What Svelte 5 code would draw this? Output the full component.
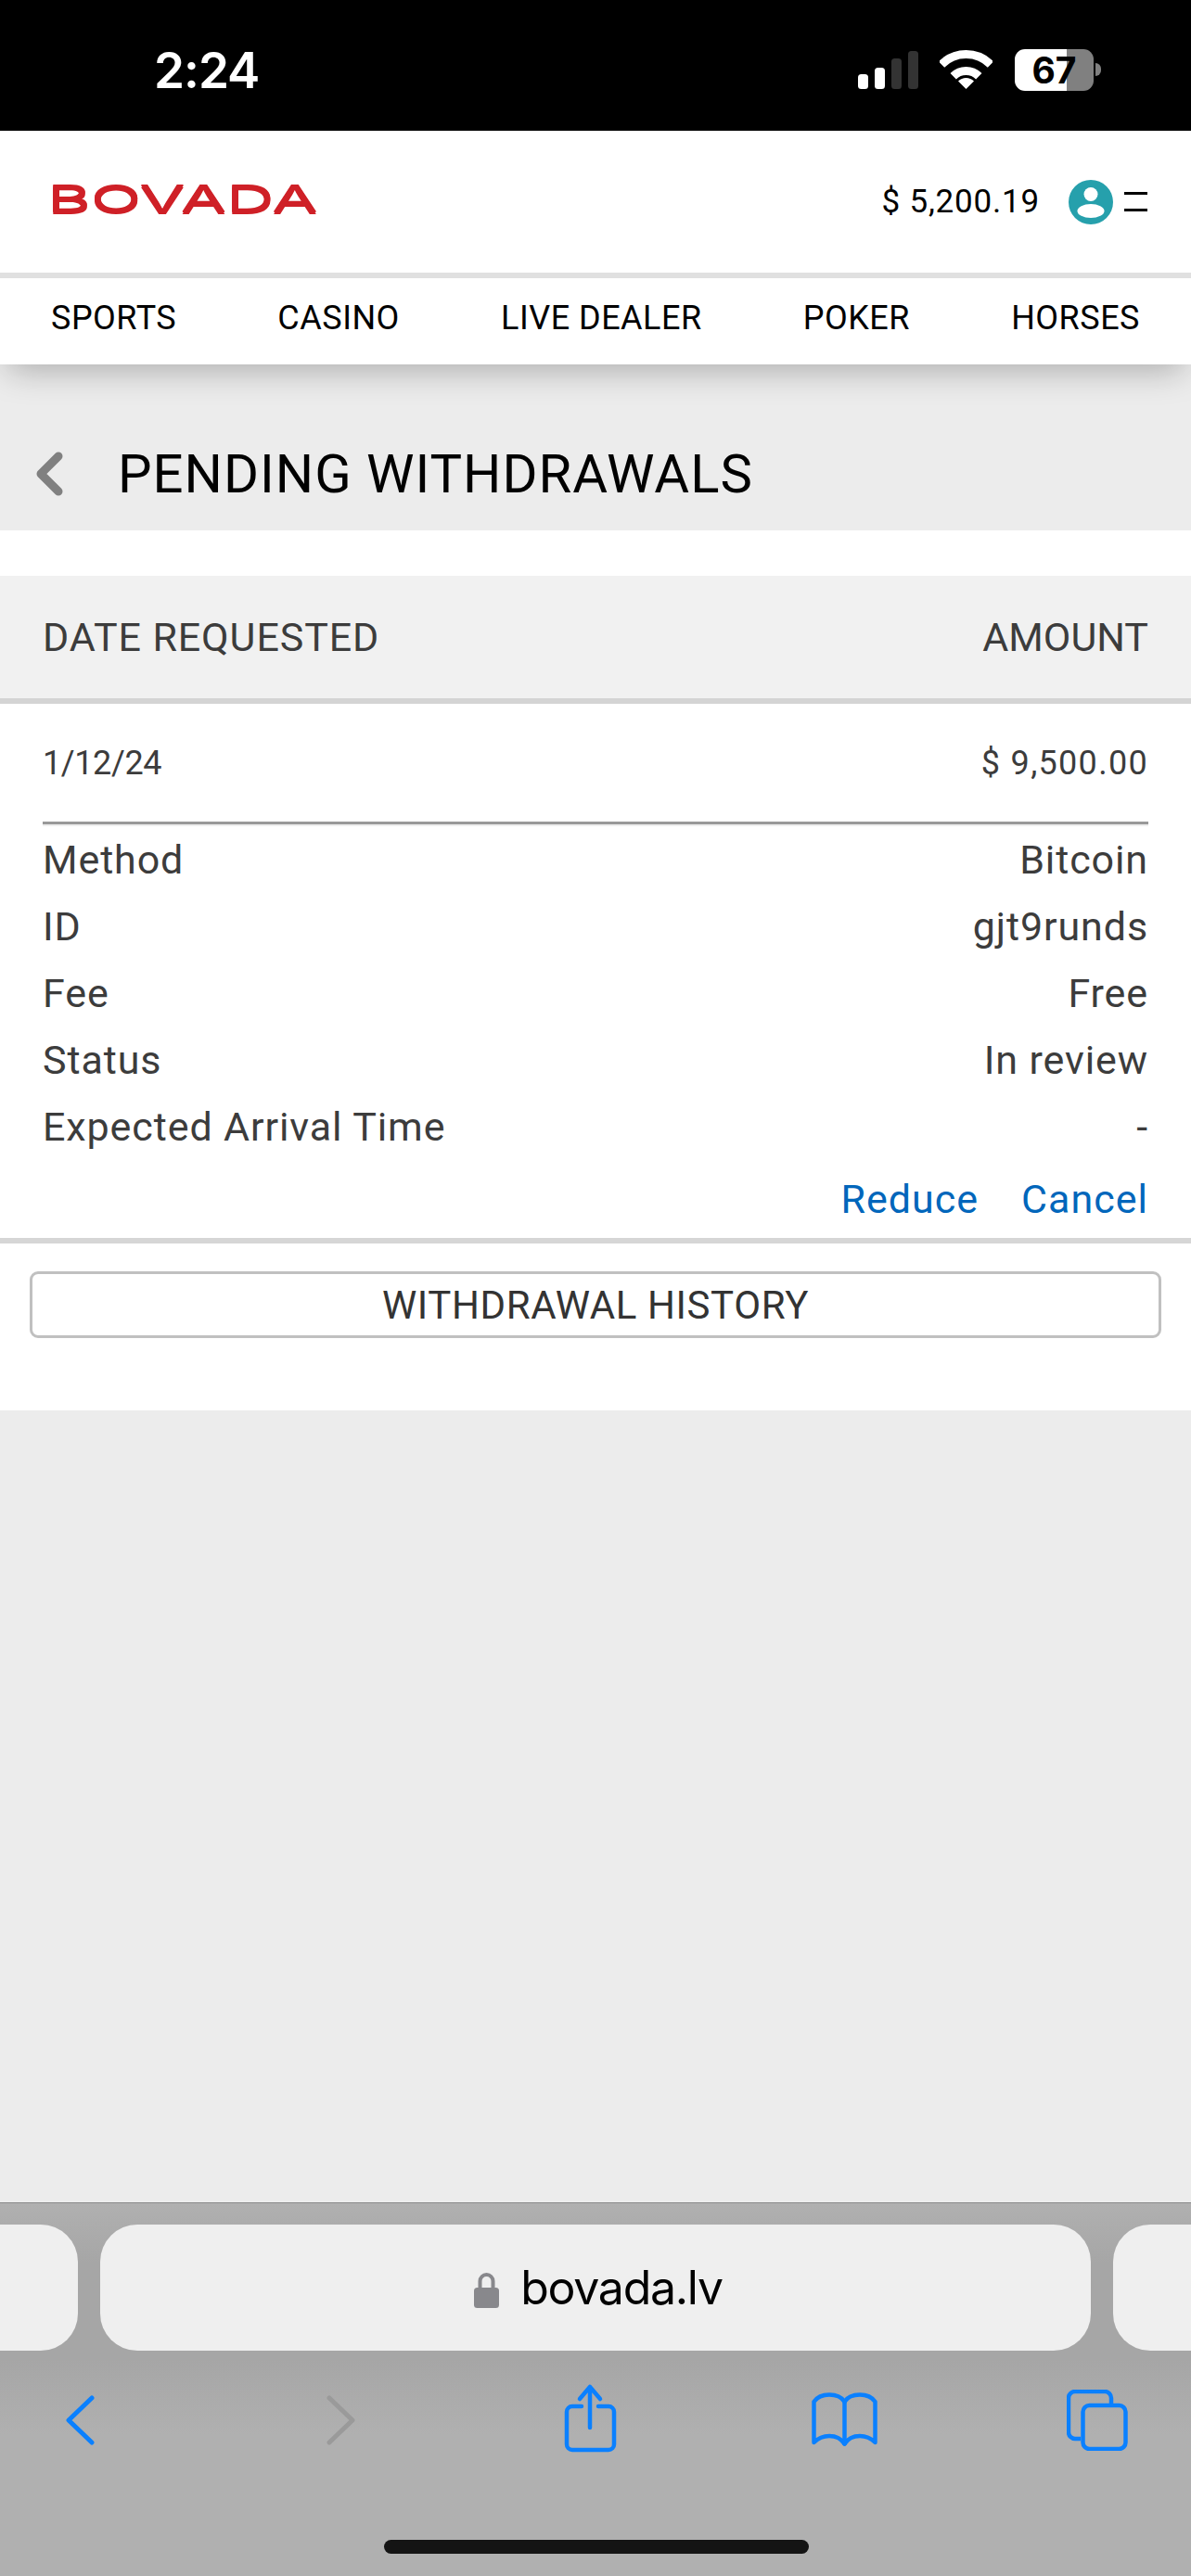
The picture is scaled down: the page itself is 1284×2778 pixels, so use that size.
<script>
  const navItems = ['SPORTS', 'CASINO', 'LIVE DEALER', 'POKER', 'HORSES'];

  const details = [
    { label: 'Method', value: 'Bitcoin' },
    { label: 'ID', value: 'gjt9runds' },
    { label: 'Fee', value: 'Free' },
    { label: 'Status', value: 'In review' },
    { label: 'Expected Arrival Time', value: '-' },
  ];
</script>

<div class="phone">
  <header class="status-bar">
    <span class="clock">2:24</span>
    <div class="status-icons">
      <svg class="signal" viewBox="0 0 65 41" aria-hidden="true">
        <rect x="0" y="25" width="11" height="16" rx="3.5" fill="#fff" />
        <rect x="18" y="18" width="11" height="23" rx="3.5" fill="#fff" />
        <rect x="36" y="8" width="11" height="33" rx="3.5" fill="#333" />
        <rect x="54" y="0" width="11" height="41" rx="3.5" fill="#333" />
      </svg>
      <svg class="wifi" viewBox="0 0 57 42" aria-hidden="true">
        <path d="M2 15.5A37.5 37.5 0 0 1 55 15.5" fill="none" stroke="#fff" stroke-width="9" />
        <path d="M14.7 28.2A19.5 19.5 0 0 1 42.3 28.2" fill="none" stroke="#fff" stroke-width="9" />
        <path d="M28.5 42L20 33.5A12 12 0 0 1 37 33.5Z" fill="#fff" />
      </svg>
      <div class="battery"><span>67</span></div>
      <div class="battery-cap"></div>
    </div>
  </header>

  <div class="top-bar">
    <span class="logo"><span class="logo-text">BOVADA</span></span>
    <div class="account">
      <span class="balance">$ 5,200.19</span>
      <svg class="avatar" viewBox="0 0 48 48" aria-hidden="true">
        <circle cx="24" cy="24" r="24" fill="#26a0ac" />
        <circle cx="24" cy="15.5" r="7.5" fill="#fff" />
        <ellipse cx="24" cy="33.5" rx="14.5" ry="7.5" fill="#fff" />
      </svg>
      <div class="menu-icon"><i></i><i></i></div>
    </div>
  </div>

  <nav class="main-nav">
    {#each navItems as item}
      <span>{item}</span>
    {/each}
  </nav>

  <div class="page-title">
    <svg class="back" viewBox="0 0 32 50" aria-hidden="true">
      <path d="M25 6L6 25L25 44" fill="none" stroke="#808080" stroke-width="9" stroke-linecap="round" stroke-linejoin="round" />
    </svg>
    <h1>PENDING WITHDRAWALS</h1>
  </div>

  <main class="panel">
    <div class="table-head">
      <span>DATE REQUESTED</span>
      <span class="amount-head">AMOUNT</span>
    </div>

    <div class="withdrawal">
      <div class="summary">
        <span class="date">1/12/24</span>
        <span class="amount">$ 9,500.00</span>
      </div>
      <dl class="details">
        {#each details as row}
          <div class="detail-row">
            <dt>{row.label}</dt>
            <dd>{row.value}</dd>
          </div>
        {/each}
      </dl>
      <div class="actions">
        <span>Reduce</span>
        <span>Cancel</span>
      </div>
    </div>

    <div class="history">
      <button type="button">WITHDRAWAL HISTORY</button>
    </div>
  </main>

  <div class="spacer"></div>

  <footer class="browser-bar">
    <div class="tabs">
      <div class="tab"></div>
      <div class="tab current">
        <svg class="lock" viewBox="0 0 27 39" aria-hidden="true">
          <path d="M6.5 18V10a7 7 0 0 1 14 0v8" fill="none" stroke="#88888c" stroke-width="4" />
          <rect x="0" y="17" width="27" height="22" rx="3.5" fill="#88888c" />
        </svg>
        <span>bovada.lv</span>
      </div>
      <div class="tab"></div>
    </div>

    <div class="tools">
      <svg class="chevron" viewBox="0 0 31 54" aria-hidden="true">
        <path d="M28 3L3 27L28 51" fill="none" stroke="#0a80ff" stroke-width="5" stroke-linecap="round" stroke-linejoin="round" />
      </svg>
      <svg class="chevron forward" viewBox="0 0 31 54" aria-hidden="true">
        <path d="M3 3L28 27L3 51" fill="none" stroke="#9a9a9a" stroke-width="5" stroke-linecap="round" stroke-linejoin="round" />
      </svg>
      <svg class="share" viewBox="0 0 58 76" aria-hidden="true">
        <g fill="none" stroke="#0a80ff" stroke-width="4.5" stroke-linecap="round" stroke-linejoin="round">
          <path d="M19 25H9a6 6 0 0 0-6 6V66a6 6 0 0 0 6 6H48a6 6 0 0 0 6-6V31a6 6 0 0 0-6-6H37" />
          <path d="M28 4V48M17 17L28 4L39 17" />
        </g>
      </svg>
      <svg class="book" viewBox="0 0 71 58" aria-hidden="true">
        <g fill="none" stroke="#0a80ff" stroke-width="4.5" stroke-linecap="round" stroke-linejoin="round">
          <path d="M35.5 10C32 4.500 26 2.500 19 2.500C11 2.500 6 5 2.500 10V54C8 48.500 14 47 19 47C26 47 32 50 35.500 55.500" />
          <path d="M35.5 10C39 4.500 45 2.500 52 2.500C60 2.500 65 5 68.500 10V54C63 48.500 57 47 52 47C45 47 39 50 35.500 55.500" />
          <path d="M35.5 10V55" />
        </g>
      </svg>
      <svg class="pages" viewBox="0 0 66 66" aria-hidden="true">
        <g fill="none" stroke="#0a80ff" stroke-width="4.5">
          <path d="M15 53H9a7 7 0 0 1-7-7V9a7 7 0 0 1 7-7H41a7 7 0 0 1 7 7v6" />
          <rect x="17.500" y="17" width="46" height="47" rx="7" />
        </g>
      </svg>
    </div>

    <div class="home-indicator"></div>
  </footer>
</div>

<style>
  :global(body) {
    background: #ececec;
  }

  .phone {
    display: flex;
    flex-direction: column;
    width: 1284px;
    height: 2778px;
    overflow: hidden;
    font-family: Roboto, sans-serif;
    color: #3c3c3c;
    background: #ececec;
  }

  .status-bar {
    flex: none;
    display: flex;
    align-items: center;
    justify-content: space-between;
    height: 141px;
    padding: 0 97px 0 166px;
    box-sizing: border-box;
    background: #000;
    color: #fff;
  }

  .clock {
    font-family: Inter, sans-serif;
    font-size: 53px;
    font-weight: 600;
    letter-spacing: -1px;
    margin-top: 11px;
  }

  .status-icons {
    display: flex;
    align-items: flex-start;
    height: 45px;
    margin-top: 10px;
  }

  .signal {
    width: 65px;
    height: 41px;
    margin: 2px 23px 0 0;
  }

  .wifi {
    width: 57px;
    height: 42px;
    margin: 1px 24px 0 0;
  }

  .battery {
    display: flex;
    align-items: center;
    justify-content: center;
    width: 85px;
    height: 45px;
    border-radius: 11px;
    background: linear-gradient(90deg, #fff 66%, #808080 66%);
    color: #000;
    font-family: Inter, sans-serif;
    font-size: 39px;
    font-weight: 700;
  }

  .battery-cap {
    width: 6px;
    height: 14px;
    margin: 15px 0 0 2px;
    border-radius: 0 7px 7px 0;
    background: #808080;
  }

  .top-bar {
    flex: none;
    position: relative;
    z-index: 1;
    display: flex;
    align-items: center;
    justify-content: space-between;
    height: 159px;
    padding: 0 47px 0 51px;
    box-sizing: border-box;
    background: #fff;
    border-bottom: 6px solid #e0e0e0;
  }

  .logo {
    display: block;
    width: 285px;
    height: 32px;
    margin-top: -6px;
    line-height: 32px;
  }

  /* the wordmark is stretched wide, the shadows keep its bars as heavy as its stems */
  .logo-text {
    display: inline-block;
    font-family: Inter, sans-serif;
    font-size: 40px;
    font-weight: 400;
    color: #cf2027;
    text-shadow: 0 1.5px 0 #cf2027, 0 -1.5px 0 #cf2027;
    transform: scaleX(1.79);
    transform-origin: left center;
  }

  .account {
    display: flex;
    align-items: center;
    color: #000;
  }

  .balance {
    font-size: 35px;
    letter-spacing: 0.8px;
    margin-right: 31px;
  }

  .avatar {
    width: 48px;
    height: 48px;
    margin-right: 12px;
  }

  .menu-icon {
    display: flex;
    flex-direction: column;
    gap: 15px;
    width: 25px;
  }

  .menu-icon i {
    display: block;
    height: 3px;
    background: #000;
  }

  .main-nav {
    flex: none;
    position: relative;
    display: flex;
    align-items: center;
    justify-content: space-between;
    height: 93px;
    padding: 0 55px 8px;
    box-sizing: border-box;
    background: #fff;
    color: #000;
    font-size: 36px;
    letter-spacing: 0.5px;
    box-shadow: 0 14px 36px -8px rgba(0, 0, 0, 0.28);
  }

  .page-title {
    flex: none;
    display: flex;
    align-items: center;
    gap: 57px;
    height: 179px;
    padding: 56px 0 0 38px;
    box-sizing: border-box;
  }

  .back {
    width: 32px;
    height: 50px;
  }

  h1 {
    margin: 0;
    font-size: 58px;
    font-weight: 400;
    letter-spacing: 1px;
    color: #000;
  }

  .panel {
    flex: none;
    height: 949px;
    padding-top: 49px;
    box-sizing: border-box;
    background: #fff;
  }

  .table-head {
    display: flex;
    align-items: center;
    justify-content: space-between;
    height: 138px;
    padding: 0 46px;
    box-sizing: border-box;
    background: #f1f1f1;
    border-bottom: 6px solid #d4d4d4;
    font-size: 43px;
    letter-spacing: 0.9px;
  }

  .amount-head {
    letter-spacing: 0;
  }

  .withdrawal {
    height: 582px;
    padding: 0 46px;
    box-sizing: border-box;
    border-bottom: 6px solid #d6d6d6;
  }

  .summary {
    display: flex;
    align-items: center;
    justify-content: space-between;
    height: 130px;
    box-sizing: border-box;
    border-bottom: 3px solid #999;
    box-shadow: 0 2px 0 #eee;
    font-size: 36px;
  }

  .date {
    letter-spacing: -0.4px;
  }

  .amount {
    letter-spacing: 1.3px;
  }

  .details {
    margin: 0;
    padding-top: 2px;
  }

  .detail-row {
    display: flex;
    justify-content: space-between;
    align-items: center;
    height: 72px;
    font-size: 43px;
    letter-spacing: 0.9px;
  }

  dt,
  dd {
    margin: 0;
  }

  .actions {
    display: flex;
    justify-content: flex-end;
    gap: 46px;
    margin-top: 17px;
    font-size: 43px;
    letter-spacing: 1px;
    color: #0066bb;
  }

  .history {
    padding: 30px 32px 0;
  }

  .history button {
    display: block;
    width: 100%;
    height: 72px;
    padding: 0;
    border: 3px solid #c0c0c0;
    border-radius: 9px;
    background: #fff;
    font: inherit;
    font-size: 42px;
    letter-spacing: 0.6px;
    color: #333;
  }

  .spacer {
    flex: 1;
  }

  .browser-bar {
    flex: none;
    position: relative;
    height: 403px;
    box-sizing: border-box;
    border-top: 1px solid #8a8a8a;
    background: linear-gradient(#b0b0b0, #a6a6a6 16%, #a6a6a6 42%, #b0b0b0 62%);
  }

  .tabs {
    display: flex;
    justify-content: center;
    gap: 24px;
    padding-top: 23px;
  }

  .tab {
    flex: none;
    width: 1068px;
    height: 136px;
    border-radius: 40px;
    background: #efefef;
  }

  .tab.current {
    display: flex;
    align-items: center;
    justify-content: center;
    gap: 23px;
    padding-left: 6px;
    box-sizing: border-box;
    color: #000;
    font-family: Inter, sans-serif;
    font-size: 50px;
    letter-spacing: -1.3px;
  }

  .lock {
    width: 27px;
    height: 39px;
    margin-top: 4px;
  }

  .tools {
    display: flex;
    align-items: center;
    height: 76px;
    margin-top: 35px;
    padding-left: 71px;
  }

  .chevron {
    width: 31px;
    height: 54px;
    margin-top: 4px;
  }

  .forward {
    margin-left: 250px;
  }

  .share {
    width: 58px;
    height: 76px;
    margin-left: 225px;
  }

  .book {
    width: 71px;
    height: 58px;
    margin: 2px 0 0 209px;
  }

  .pages {
    width: 66px;
    height: 66px;
    margin: 4px 0 0 204px;
  }

  .home-indicator {
    position: absolute;
    left: 414px;
    bottom: 24px;
    width: 458px;
    height: 15px;
    border-radius: 8px;
    background: #141414;
  }
</style>
